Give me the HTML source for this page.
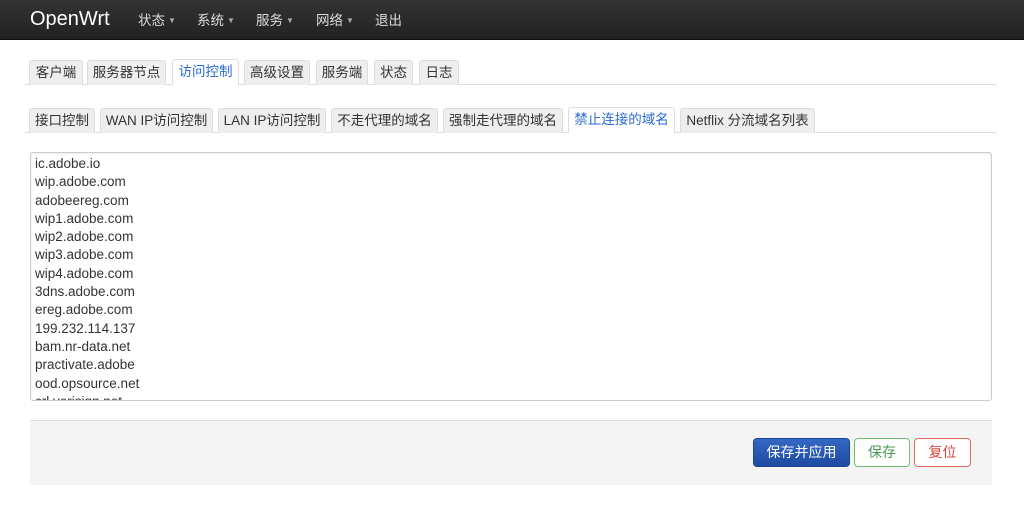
<!DOCTYPE html><html><head><meta charset="utf-8"><style>
*{box-sizing:border-box;margin:0;padding:0}
body{width:1024px;height:512px;background:#fff;font-family:"Liberation Sans","Noto Sans CJK SC",sans-serif;font-size:13px;color:#333;position:relative;overflow:hidden}
.nav{position:absolute;left:0;top:0;width:1024px;height:40px;background:linear-gradient(#333,#222);border-bottom:1px solid #111}
.brand{position:absolute;left:30px;top:8px;color:#fff;font-size:20px;font-weight:300}
.m{position:absolute;top:9px;color:#ddd;font-size:13.5px}
.m i{font-style:normal;font-size:8px;color:#aaa;margin-left:3px;vertical-align:2px}
.tab{position:absolute;height:25px;border:1px solid #ddd;border-bottom:none;border-radius:3px 3px 0 0;background:#eee;text-align:center;line-height:24px;font-size:13.5px;color:#333;white-space:nowrap}
.tab.a{background:#fff;color:#2a6bd5;height:26px}
.line{position:absolute;left:25px;width:972px;height:1px;background:#ddd}
.ta{position:absolute;left:30px;top:152px;width:962px;height:249px;border:1px solid #ccc;border-radius:3px;overflow:hidden;padding:2px 4px;font-size:13.5px;line-height:18.3px;color:#333;box-shadow:inset 0 1px 2px rgba(0,0,0,.08)}
.foot{position:absolute;left:30px;top:420px;width:962px;height:65px;background:#f4f4f4;border-top:1px solid #ddd}
.b{position:absolute;top:438px;height:29px;border-radius:4px;text-align:center;line-height:27px;font-size:14px}
</style></head><body>
<div class="nav"><div class="brand">OpenWrt</div>
<div class="m" style="left:138px">状态<i>▼</i></div>
<div class="m" style="left:197px">系统<i>▼</i></div>
<div class="m" style="left:256px">服务<i>▼</i></div>
<div class="m" style="left:316px">网络<i>▼</i></div>
<div class="m" style="left:375px">退出</div></div>
<div class="line" style="top:84px"></div>
<div class="tab" style="left:29px;top:60px;width:54px">客户端</div>
<div class="tab" style="left:87px;top:60px;width:79px">服务器节点</div>
<div class="tab a" style="left:172px;top:59px;width:67px">访问控制</div>
<div class="tab" style="left:244px;top:60px;width:66px">高级设置</div>
<div class="tab" style="left:316px;top:60px;width:52px">服务端</div>
<div class="tab" style="left:374px;top:60px;width:39px">状态</div>
<div class="tab" style="left:419px;top:60px;width:40px">日志</div>
<div class="line" style="top:132px"></div>
<div class="tab" style="left:29px;top:108px;width:66px">接口控制</div>
<div class="tab" style="left:100px;top:108px;width:113px">WAN IP访问控制</div>
<div class="tab" style="left:218px;top:108px;width:108px">LAN IP访问控制</div>
<div class="tab" style="left:331px;top:108px;width:107px">不走代理的域名</div>
<div class="tab" style="left:443px;top:108px;width:120px">强制走代理的域名</div>
<div class="tab a" style="left:568px;top:107px;width:107px">禁止连接的域名</div>
<div class="tab" style="left:680px;top:108px;width:135px">Netflix 分流域名列表</div>
<div class="ta">ic.adobe.io<br>wip.adobe.com<br>adobeereg.com<br>wip1.adobe.com<br>wip2.adobe.com<br>wip3.adobe.com<br>wip4.adobe.com<br>3dns.adobe.com<br>ereg.adobe.com<br>199.232.114.137<br>bam.nr-data.net<br>practivate.adobe<br>ood.opsource.net<br>crl.verisign.net</div>
<div class="foot"></div>
<div class="b" style="left:753px;width:97px;background:linear-gradient(#3468c4,#1f4aa0);color:#fff;border:1px solid #1d4597">保存并应用</div>
<div class="b" style="left:854px;width:56px;background:#fff;color:#4a9a52;border:1px solid #6cbf72">保存</div>
<div class="b" style="left:914px;width:57px;background:#fff;color:#d9453b;border:1px solid #e06a5e">复位</div>
</body></html>
